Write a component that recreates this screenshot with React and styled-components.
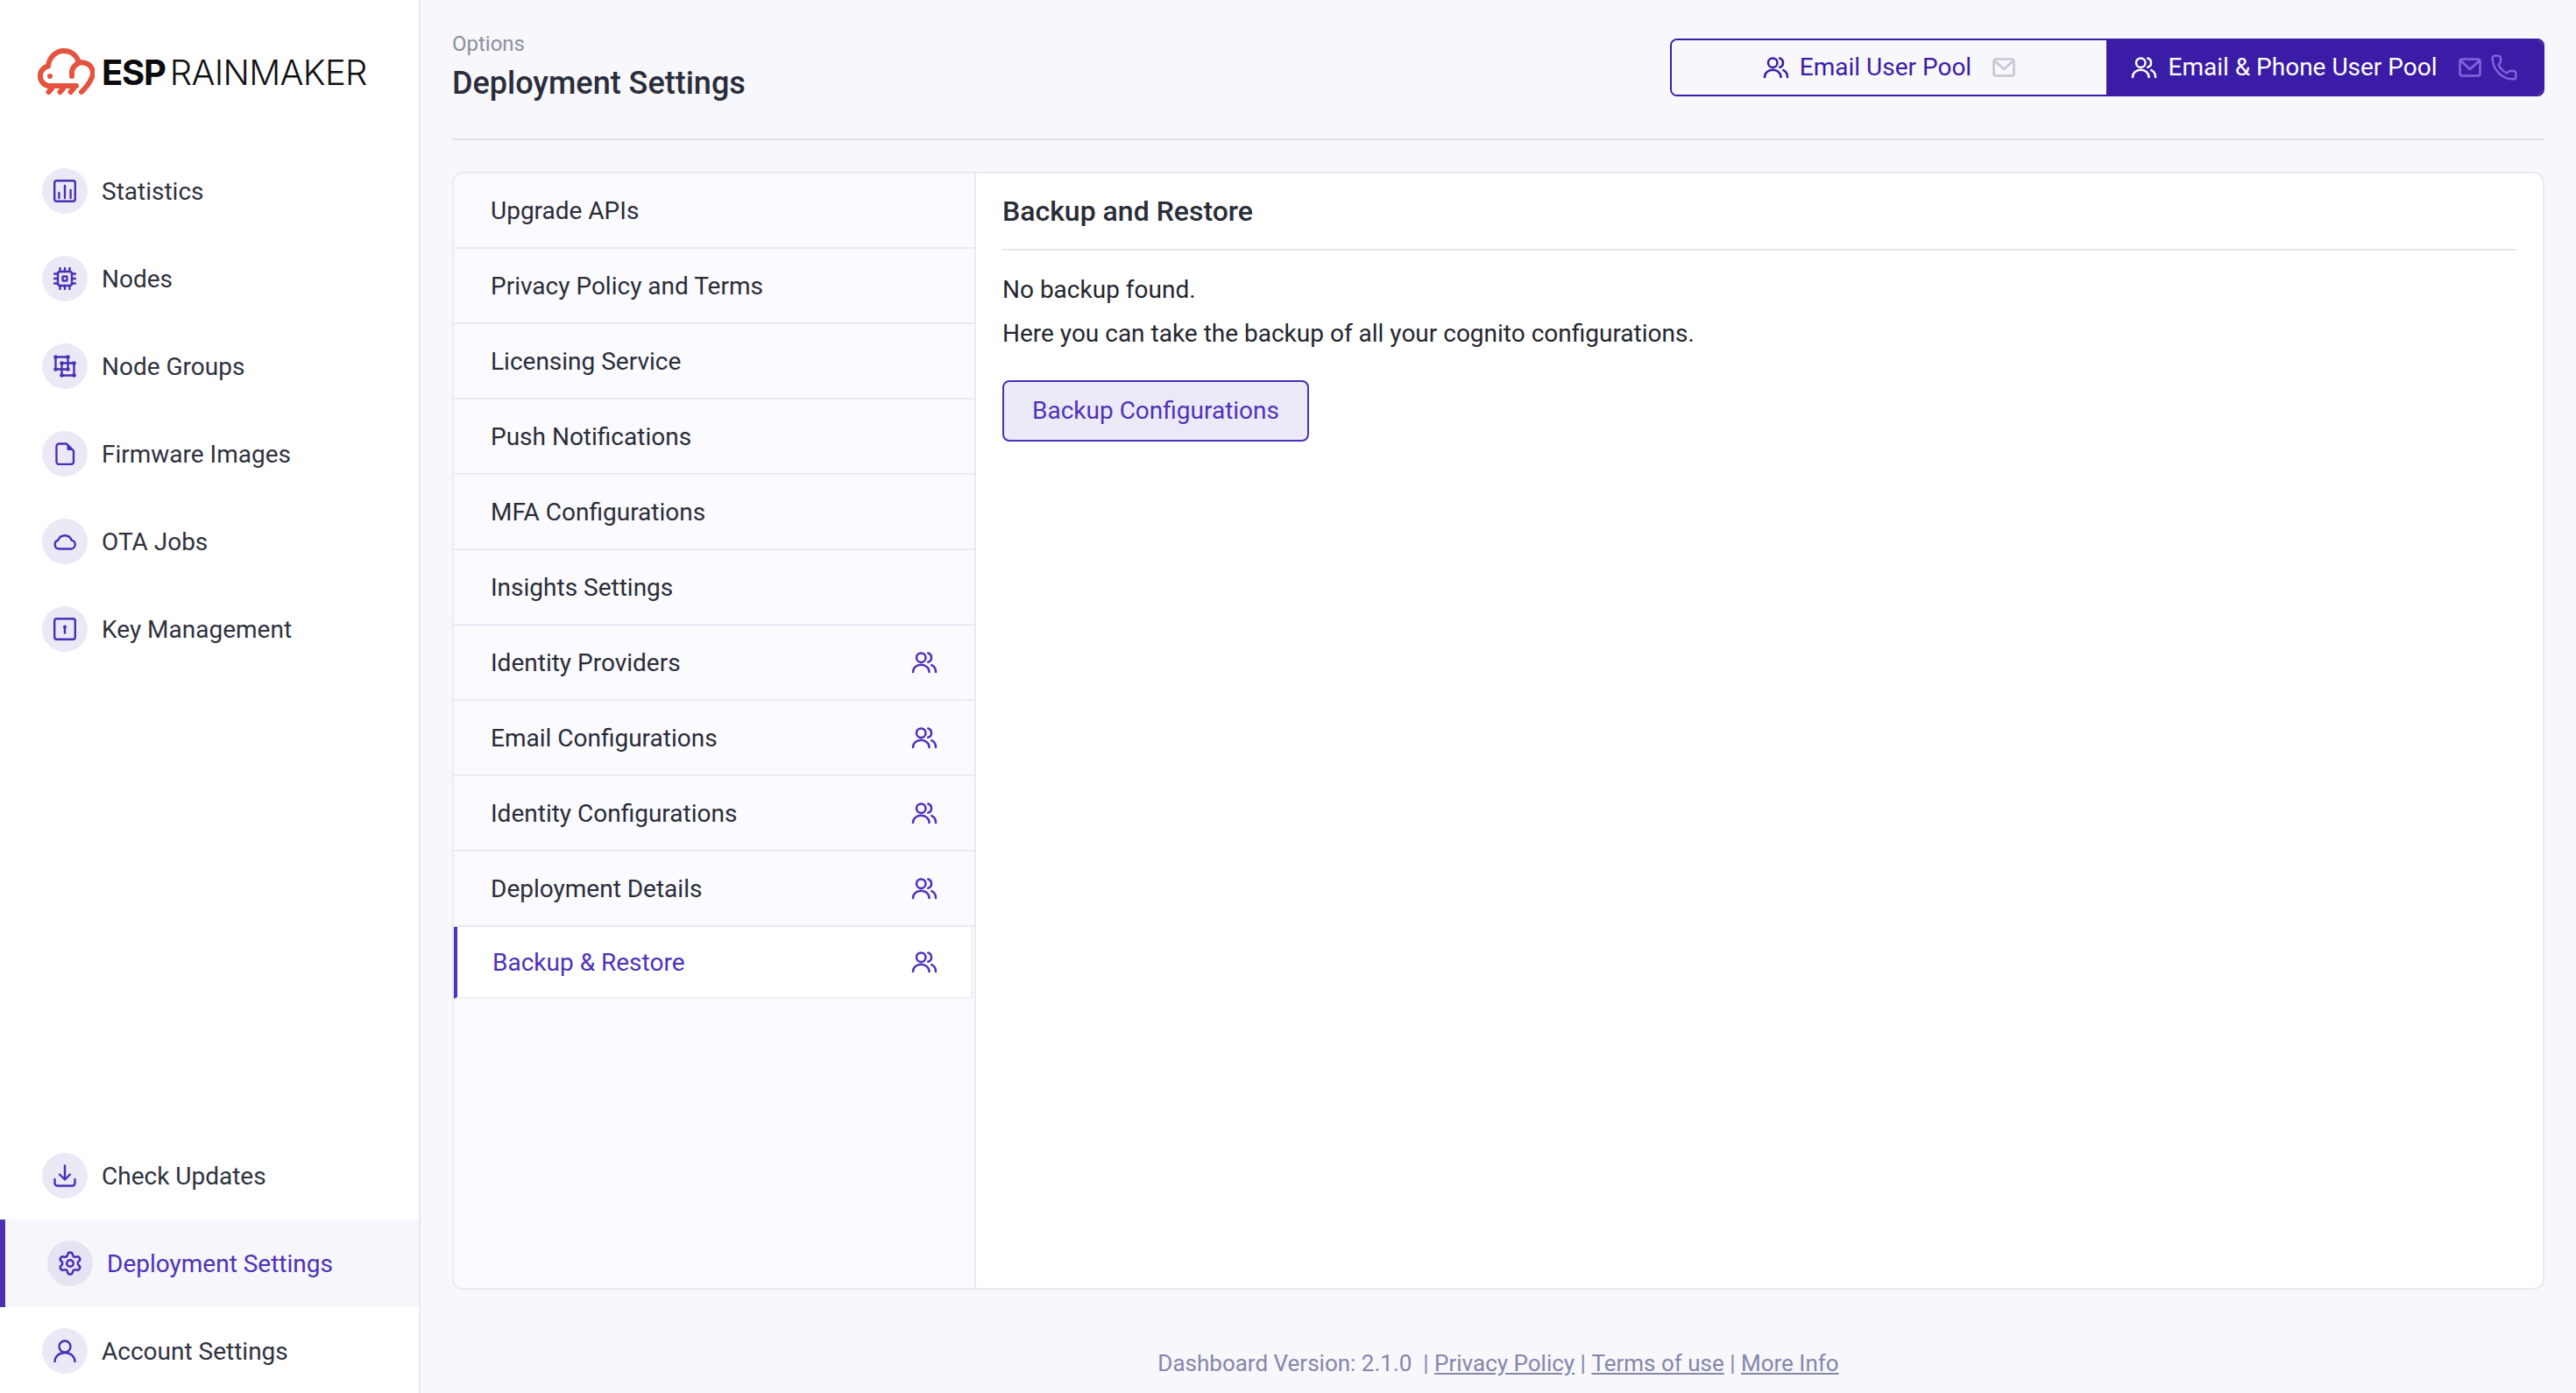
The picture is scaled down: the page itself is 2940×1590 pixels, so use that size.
import React from "react"
import styled, { createGlobalStyle } from "styled-components"
import { Settings, Phone } from "lucide-react"

const GlobalStyle = createGlobalStyle`
  * { box-sizing: border-box; }
  html, body { margin: 0; padding: 0; height: 100%; }
  body {
    font-family: Roboto, "Liberation Sans", sans-serif;
    background: #f7f7fc;
    color: #2c2f3a;
    overflow: hidden;
  }
`

const Page = styled.div`
  display: flex;
  width: 2940px;
  height: 1590px;
  overflow: hidden;
`

const Sidebar = styled.aside`
  flex: 0 0 480px;
  height: 1590px;
  display: flex;
  flex-direction: column;
  background: #fff;
  border-right: 2px solid #e6eaf5;
  overflow: hidden;
`

const Logo = styled.div`
  display: flex;
  align-items: center;
  height: 168px;
  padding: 0 0 4px 42px;
`

const LogoMark = styled.svg`
  width: 66px;
  height: 54px;
  margin-right: 8px;
  flex: none;
`

const LogoBold = styled.span`
  font-family: Inter, sans-serif;
  font-weight: 700;
  font-size: 40px;
  color: #0b0b0d;
  letter-spacing: -1.2px;
  margin-right: 5px;
`

const LogoLight = styled.span`
  font-family: Inter, sans-serif;
  font-weight: 300;
  font-size: 40px;
  color: #111114;
  letter-spacing: -0.7px;
`

const NavList = styled.nav`
  display: flex;
  flex-direction: column;
`

const BottomNav = styled(NavList)`
  margin-top: auto;
  margin-bottom: -2px;
`

const NavItem = styled.a`
  display: flex;
  align-items: center;
  height: 100px;
  padding-left: 48px;
  border-left: ${(p) => (p.$active ? "6px solid #4f2fb0" : "none")};
  background: ${(p) => (p.$active ? "#f6f6fb" : "transparent")};
  color: ${(p) => (p.$active ? "#4d32b8" : "#2f323e")};
  font-size: 28px;
`

const NavBubble = styled.span`
  flex: none;
  display: flex;
  align-items: center;
  justify-content: center;
  width: 52px;
  height: 52px;
  border-radius: 50%;
  margin-right: 16px;
  background: ${(p) => (p.$active ? "#e6e3f3" : "#ece9f7")};
  color: #4a2fb5;
`

const Glyph = styled.svg`
  width: ${(p) => p.$size || 26}px;
  height: ${(p) => p.$size || 26}px;
  flex: none;
  fill: none;
  stroke: currentColor;
  stroke-width: ${(p) => p.$weight || 2.4};
  stroke-linecap: round;
  stroke-linejoin: round;
`

const Main = styled.main`
  flex: 1;
  min-width: 0;
  display: flex;
  flex-direction: column;
  padding: 0 36px;
`

const Header = styled.header`
  flex: none;
  height: 160px;
  display: flex;
  align-items: flex-start;
  justify-content: space-between;
  border-bottom: 2px solid #dfdfe6;
`

const TitleBlock = styled.div`
  padding-top: 35px;
`

const Crumb = styled.div`
  font-size: 24px;
  line-height: 30px;
  color: #8e8f9b;
`

const Title = styled.h1`
  margin: 10px 0 0;
  font-size: 36px;
  line-height: 40px;
  font-weight: 500;
  color: #2a2d3a;
`

const PoolToggle = styled.div`
  display: flex;
  width: 998px;
  height: 66px;
  margin-top: 44px;
  border: 2px solid #3b1ca6;
  border-radius: 8px;
  overflow: hidden;
`

const PoolOption = styled.div`
  flex: ${(p) => (p.$selected ? "0 0 498px" : "1")};
  display: flex;
  align-items: center;
  justify-content: center;
  padding-bottom: 1px;
  font-size: 28px;
  background: ${(p) => (p.$selected ? "#3b1ca6" : "#f8f7fc")};
  color: ${(p) => (p.$selected ? "#fff" : "#3b1ca6")};
`

const PoolLabel = styled.span`
  margin: 0 24px 0 12px;
`

const Hint = styled.span`
  display: flex;
  align-items: center;
  gap: 10px;
  color: ${(p) => (p.$selected ? "#8065de" : "#c8c7d2")};
`

const Card = styled.section`
  flex: none;
  height: 1276px;
  margin-top: 36px;
  display: flex;
  background: #fff;
  border: 2px solid #e8ebf5;
  border-radius: 12px;
  overflow: hidden;
`

const SideList = styled.div`
  flex: 0 0 596px;
  background: #fafaff;
  border-right: 2px solid #e8ebf5;
`

const SideRow = styled.div`
  display: flex;
  align-items: center;
  justify-content: space-between;
  height: 86px;
  padding: 0 42px;
  font-size: 28px;
  color: #2a2d38;
  border-bottom: 2px solid #e8ebf5;
`

const ActiveRow = styled(SideRow)`
  height: 82px;
  margin-right: 2px;
  padding: 0 38px 0 40px;
  background: #fff;
  color: #4d32b8;
  border-left: 4px solid #4f33b8;
  border-right: 2px solid #efeff2;
  border-bottom: 2px solid #efeff2;
`

const RowIcon = styled.span`
  display: flex;
  color: #4d32b8;
`

const Content = styled.div`
  flex: 1;
  min-width: 0;
  padding: 0 30px;
`

const ContentHead = styled.h2`
  margin: 0;
  height: 88px;
  display: flex;
  align-items: center;
  font-size: 32px;
  font-weight: 500;
  color: #2a2d38;
  border-bottom: 2px solid #e7e7ea;
`

const Copy = styled.p`
  margin: 0;
  font-size: 28px;
  line-height: 50px;
  color: #24262f;
`

const CopyBlock = styled.div`
  padding-top: 20px;
`

const ActionButton = styled.button`
  display: block;
  margin-top: 28px;
  height: 70px;
  padding: 0 32px 2px;
  font-family: inherit;
  font-size: 28px;
  color: #4f33b8;
  background: #eceaf8;
  border: 2px solid #4b30b5;
  border-radius: 8px;
`

const Footer = styled.footer`
  flex: 1;
  display: flex;
  align-items: flex-start;
  justify-content: center;
  padding-top: 68px;
  font-size: 26px;
  line-height: 32px;
  color: #8686aa;
  white-space: pre;
`

const FooterLink = styled.a`
  color: inherit;
  text-decoration: underline;
`

const UsersIcon = ({ size = 30 }) => (
  <Glyph viewBox="0 0 24 24" $size={size} $weight={2}>
    <circle cx="9" cy="7.7" r="4.2" />
    <path d="M1.6 20.8c0-3.8 3.2-6.600 7.400-6.600s7.400 2.800 7.400 6.600" />
    <path d="M15.400 3.600a4.300 4.300 0 0 1 0 8.200" />
    <path d="M18.600 14.500c2.300 1 3.800 3.200 3.800 6.300" />
  </Glyph>
)

const MailIcon = () => (
  <Glyph viewBox="0 0 26 26" $size={26} $weight={2.6}>
    <rect x="1.500" y="3.500" width="23" height="19" rx="2.500" />
    <path d="M2.500 5.500 13 15 23.500 5.500" />
  </Glyph>
)

const LogoIcon = () => (
  <LogoMark viewBox="0 0 66 54" fill="none" stroke="#e5533f" strokeWidth="6" strokeLinecap="round" strokeLinejoin="round">
    <path d="M45 43H13A11.500 11.500 0 0 1 13 20.500C14 10 22 3 31 3C39 3 45 8 47.500 15" />
    <path d="M40 32V29A12 12 0 1 1 62 35C60 40 56 45 51 50" />
    <path d="M17 46 13.500 50M30 46 26.500 50M42 46 38.500 50" />
    <circle cx="15" cy="32" r="3" fill="#e5533f" stroke="none" />
  </LogoMark>
)

const icons = {
  stats: (
    <Glyph viewBox="0 0 26 26">
      <rect x="1.200" y="1.200" width="23.600" height="23.600" rx="2.500" />
      <path d="M6.400 15v6M13 7v14M19.600 12v9" />
    </Glyph>
  ),
  chip: (
    <Glyph viewBox="0 0 26 26">
      <rect x="5" y="5" width="16" height="16" rx="2.500" />
      <rect x="10.500" y="10.500" width="5" height="5" rx="0.600" />
      <path d="M7.500 1v4M13 1v4M18.500 1v4M7.500 21v4M13 21v4M18.500 21v4M1 7.500h4M1 13h4M1 18.500h4M21 7.500h4M21 13h4M21 18.500h4" />
    </Glyph>
  ),
  groups: (
    <Glyph viewBox="0 0 26 26">
      <path d="M2.500 2.500h14v14h-14zM9.500 9.500h14v14h-14z" />
      <g fill="currentColor" stroke="none">
        <circle cx="2.500" cy="2.500" r="2.300" />
        <circle cx="16.500" cy="2.500" r="2.300" />
        <circle cx="2.500" cy="16.500" r="2.300" />
        <circle cx="16.500" cy="16.500" r="2.300" />
        <circle cx="9.500" cy="9.500" r="2.300" />
        <circle cx="23.500" cy="9.500" r="2.300" />
        <circle cx="9.500" cy="23.500" r="2.300" />
        <circle cx="23.500" cy="23.500" r="2.300" />
      </g>
    </Glyph>
  ),
  file: (
    <Glyph viewBox="0 0 26 26">
      <path d="M6.500 1.500h8.500L23 9.500V22a3 3 0 0 1-3 3H6.500a3 3 0 0 1-3-3V4.500a3 3 0 0 1 3-3z" />
      <path d="M15.500 2.500 22 9h-5a1.500 1.500 0 0 1-1.500-1.500z" fill="currentColor" stroke="none" />
    </Glyph>
  ),
  cloud: (
    <Glyph viewBox="0 0 26 26">
      <path d="M6.500 21.500h13a5 5 0 0 0 1.200-9.900A8.200 8.200 0 0 0 5.300 11.700 5 5 0 0 0 6.500 21.500z" />
    </Glyph>
  ),
  key: (
    <Glyph viewBox="0 0 26 26">
      <rect x="1.200" y="1.200" width="23.600" height="23.600" rx="2.500" />
      <path d="M13 11.500v6" />
      <circle cx="13" cy="10.500" r="2" fill="currentColor" stroke="none" />
    </Glyph>
  ),
  download: (
    <Glyph viewBox="0 0 26 26">
      <path d="M1.500 17v4.500a3 3 0 0 0 3 3h17a3 3 0 0 0 3-3V17" />
      <path d="M13 1.500V17M7 11.500l6 6 6-6" />
    </Glyph>
  ),
  gear: <Settings size={30} strokeWidth={2} />,
  user: (
    <Glyph viewBox="0 0 26 26">
      <circle cx="13" cy="8" r="6.500" />
      <path d="M1.500 25.500c0-6.200 5-10.500 11.500-10.500s11.500 4.300 11.500 10.500" />
    </Glyph>
  ),
}

const topNav = [
  ["stats", "Statistics"],
  ["chip", "Nodes"],
  ["groups", "Node Groups"],
  ["file", "Firmware Images"],
  ["cloud", "OTA Jobs"],
  ["key", "Key Management"],
]

const bottomNav = [
  ["download", "Check Updates"],
  ["gear", "Deployment Settings", true],
  ["user", "Account Settings"],
]

const options = [
  ["Upgrade APIs"],
  ["Privacy Policy and Terms"],
  ["Licensing Service"],
  ["Push Notifications"],
  ["MFA Configurations"],
  ["Insights Settings"],
  ["Identity Providers", true],
  ["Email Configurations", true],
  ["Identity Configurations", true],
  ["Deployment Details", true],
]

const renderNav = ([icon, label, active]) => (
  <NavItem key={label} $active={active}>
    <NavBubble $active={active}>{icons[icon]}</NavBubble>
    {label}
  </NavItem>
)

const App = () => (
  <>
    <GlobalStyle />
    <Page>
      <Sidebar>
        <Logo>
          <LogoIcon />
          <LogoBold>ESP</LogoBold>
          <LogoLight>RAINMAKER</LogoLight>
        </Logo>
        <NavList>{topNav.map(renderNav)}</NavList>
        <BottomNav>{bottomNav.map(renderNav)}</BottomNav>
      </Sidebar>

      <Main>
        <Header>
          <TitleBlock>
            <Crumb>Options</Crumb>
            <Title>Deployment Settings</Title>
          </TitleBlock>
          <PoolToggle>
            <PoolOption>
              <UsersIcon />
              <PoolLabel>Email User Pool</PoolLabel>
              <Hint>
                <MailIcon />
              </Hint>
            </PoolOption>
            <PoolOption $selected>
              <UsersIcon />
              <PoolLabel>Email &amp; Phone User Pool</PoolLabel>
              <Hint $selected>
                <MailIcon />
                <Phone size={32} strokeWidth={1.8} />
              </Hint>
            </PoolOption>
          </PoolToggle>
        </Header>

        <Card>
          <SideList>
            {options.map(([label, pool]) => (
              <SideRow key={label}>
                {label}
                {pool && (
                  <RowIcon>
                    <UsersIcon />
                  </RowIcon>
                )}
              </SideRow>
            ))}
            <ActiveRow>
              Backup &amp; Restore
              <RowIcon>
                <UsersIcon />
              </RowIcon>
            </ActiveRow>
          </SideList>
          <Content>
            <ContentHead>Backup and Restore</ContentHead>
            <CopyBlock>
              <Copy>No backup found.</Copy>
              <Copy>Here you can take the backup of all your cognito configurations.</Copy>
            </CopyBlock>
            <ActionButton>Backup Configurations</ActionButton>
          </Content>
        </Card>

        <Footer>
          Dashboard Version: 2.1.0{"  "}| <FooterLink>Privacy Policy</FooterLink> | <FooterLink>Terms of use</FooterLink> | <FooterLink>More Info</FooterLink>
        </Footer>
      </Main>
    </Page>
  </>
)

export default App
